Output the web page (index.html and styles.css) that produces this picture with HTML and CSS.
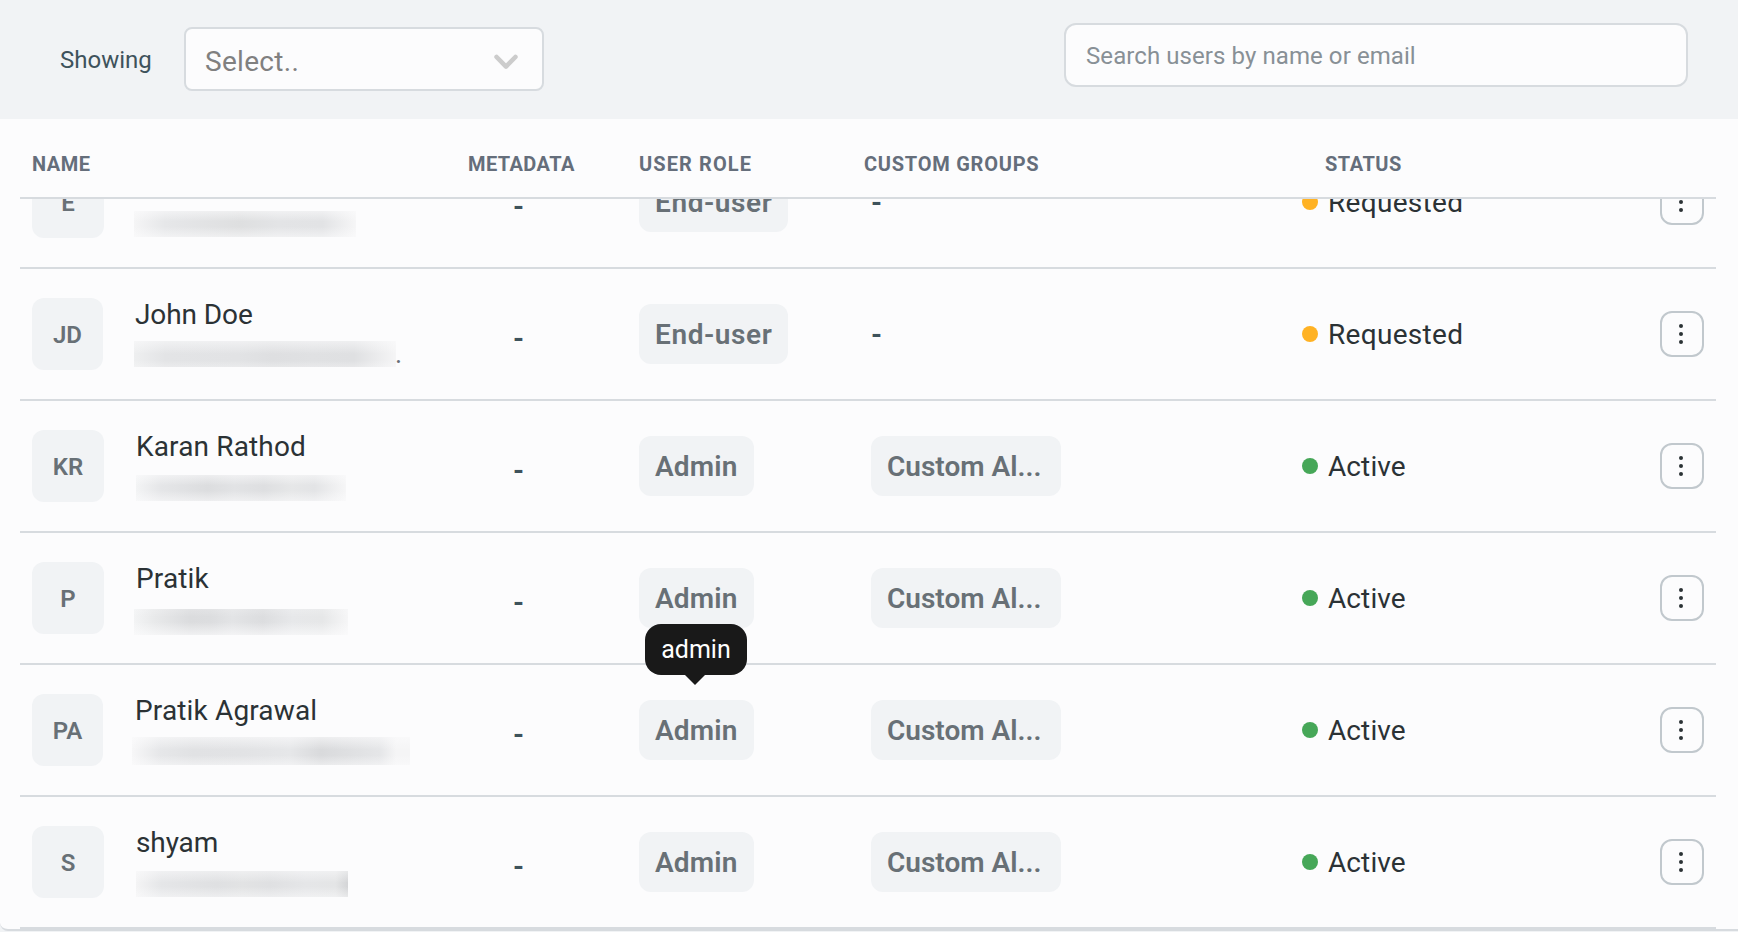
FILE: index.html
```html
<!DOCTYPE html>
<html lang="en">
<head>
<meta charset="utf-8">
<title>Users</title>
<link rel="stylesheet" href="styles.css">
</head>
<body>
<svg class="defs" aria-hidden="true">
  <symbol id="dots" viewBox="0 0 20 20"><circle cx="10" cy="2" r="2"/><circle cx="10" cy="10" r="2"/><circle cx="10" cy="18" r="2"/></symbol>
</svg>
<main class="panel">
  <section class="toolbar">
    <span class="label">Showing</span>
    <div class="select">
      <span>Select..</span>
      <svg class="chevron" viewBox="0 0 24 16"><path d="M2.6 3 12 12.6 21.4 3"/></svg>
    </div>
    <div class="search">Search users by name or email</div>
  </section>
  <section class="table">
    <div class="head grid">
      <span class="h-name">NAME</span>
      <span class="h-meta">METADATA</span>
      <span class="h-role">USER ROLE</span>
      <span class="h-groups">CUSTOM GROUPS</span>
      <span class="h-status">STATUS</span>
    </div>
    <div class="rows">
      <div class="row grid">
        <div class="user"><div class="avatar">E</div><div class="info"><div class="name"></div><div class="mask mask-1"></div></div></div>
        <div class="meta">-</div>
        <div class="role"><span class="pill pill-enduser">End-user</span></div>
        <div class="groups none">-</div>
        <div class="status pending"><i class="dot"></i><span>Requested</span></div>
        <button class="more"><svg><use href="#dots"/></svg></button>
      </div>
      <div class="row grid">
        <div class="user"><div class="avatar narrow">JD</div><div class="info"><div class="name name-jd">John Doe</div><div class="masked"><div class="mask mask-2"></div><span class="tail">.</span></div></div></div>
        <div class="meta">-</div>
        <div class="role"><span class="pill pill-enduser">End-user</span></div>
        <div class="groups none">-</div>
        <div class="status pending"><i class="dot"></i><span>Requested</span></div>
        <button class="more"><svg><use href="#dots"/></svg></button>
      </div>
      <div class="row grid">
        <div class="user"><div class="avatar">KR</div><div class="info"><div class="name">Karan Rathod</div><div class="mask mask-3"></div></div></div>
        <div class="meta">-</div>
        <div class="role"><span class="pill pill-admin">Admin</span></div>
        <div class="groups"><span class="pill pill-group">Custom Al...</span></div>
        <div class="status"><i class="dot"></i><span>Active</span></div>
        <button class="more"><svg><use href="#dots"/></svg></button>
      </div>
      <div class="row grid">
        <div class="user"><div class="avatar">P</div><div class="info"><div class="name">Pratik</div><div class="mask mask-4"></div></div></div>
        <div class="meta">-</div>
        <div class="role"><span class="pill pill-admin">Admin</span></div>
        <div class="groups"><span class="pill pill-group">Custom Al...</span></div>
        <div class="status"><i class="dot"></i><span>Active</span></div>
        <button class="more"><svg><use href="#dots"/></svg></button>
      </div>
      <div class="row grid">
        <div class="user"><div class="avatar narrow">PA</div><div class="info"><div class="name">Pratik Agrawal</div><div class="mask mask-5"></div></div></div>
        <div class="meta">-</div>
        <div class="role"><span class="pill pill-admin">Admin<span class="tooltip">admin</span></span></div>
        <div class="groups"><span class="pill pill-group">Custom Al...</span></div>
        <div class="status"><i class="dot"></i><span>Active</span></div>
        <button class="more"><svg><use href="#dots"/></svg></button>
      </div>
      <div class="row grid">
        <div class="user"><div class="avatar">S</div><div class="info"><div class="name name-sh">shyam</div><div class="mask mask-6"></div></div></div>
        <div class="meta">-</div>
        <div class="role"><span class="pill pill-admin">Admin</span></div>
        <div class="groups"><span class="pill pill-group">Custom Al...</span></div>
        <div class="status"><i class="dot"></i><span>Active</span></div>
        <button class="more"><svg><use href="#dots"/></svg></button>
      </div>
    </div>
  </section>
</main>
</body>
</html>
```
FILE: styles.css
```css
* { box-sizing: border-box; }
body {
  margin: 0;
  height: 932px;
  overflow: hidden;
  background: #f1f3f5;
  color: #2b3235;
  font: 28px/32px Roboto, "Liberation Sans", sans-serif;
}
.defs { display: none; }
.panel {
  height: 931px;
  overflow: hidden;
  background: #fcfcfd;
  border-bottom: 2px solid #d7dbdf;
  border-bottom-left-radius: 8px;
}

.toolbar {
  display: flex;
  height: 119px;
  padding: 0 50px 0 60px;
  background: #f1f3f5;
}
.label {
  width: 124px;
  padding-top: 44px;
  color: #3e525b;
  font-size: 24px;
}
.select {
  display: flex;
  justify-content: space-between;
  align-items: center;
  width: 360px;
  height: 64px;
  margin-top: 27px;
  padding: 5px 24px 0 19px;
  background: #fcfcfd;
  border: 2px solid #d7dbdf;
  border-radius: 8px;
  color: #808080;
  letter-spacing: .3px;
}
.chevron {
  width: 24px;
  height: 16px;
  fill: none;
  stroke: #ccc;
  stroke-width: 4.6;
  stroke-linecap: round;
  stroke-linejoin: round;
}
.search {
  width: 624px;
  height: 64px;
  margin: 23px 0 0 auto;
  padding-left: 20px;
  background: #fcfcfd;
  border: 2px solid #d7dbdf;
  border-radius: 12px;
  color: #889096;
  font-size: 24px;
  letter-spacing: .08px;
  line-height: 63px;
}

.table { padding: 0 22px 0 20px; }
.grid {
  display: grid;
  grid-template-columns: 437px 170px 225px 438px 358px 44px;
  padding-left: 12px;
  border-bottom: 2px solid #d7dbdf;
}
.head {
  height: 80px;
  padding-top: 33px;
  color: #656e7b;
  font-size: 20px;
  font-weight: 700;
  line-height: 24px;
}
.h-name { letter-spacing: .5px; }
.h-meta { margin-left: -1px; letter-spacing: .4px; }
.h-role { letter-spacing: 1.1px; }
.h-groups { letter-spacing: .75px; }
.h-status { padding-left: 23px; letter-spacing: .5px; }

.rows {
  height: 730px;
  margin-right: -22px;
  padding-right: 22px;
  overflow: hidden;
}
.row {
  height: 132px;
  align-items: center;
}
.row:first-child { margin-top: -62px; }
.user { display: flex; gap: 32px; }
.avatar {
  width: 72px;
  height: 72px;
  background: #f1f3f5;
  border-radius: 12px;
  color: #687076;
  font-size: 24px;
  font-weight: 600;
  line-height: 74px;
  text-align: center;
}
.narrow { width: 71px; }
.info { height: 72px; }
.name {
  height: 32px;
  line-height: 34px;
  letter-spacing: .15px;
}
.name-jd, .name-sh { letter-spacing: -.1px; }

/* Redacted e-mail strips: edge fade laid over uneven grey tones */
.mask {
  width: 212px;
  height: 26px;
  margin-top: 13px;
  background:
    linear-gradient(rgba(252,252,253,.55), rgba(252,252,253,0) 40% 60%, rgba(252,252,253,.55)),
    linear-gradient(90deg, #f5f5f6, #e6e7e9 14%, #dedfe0 48%, #e3e4e6 65%, #e2e3e5 85%, #f6f6f7);
}
.mask-1 { width: 222px; margin-left: -2px; }
.mask-2 {
  width: 262px;
  margin: 0 0 0 -1px;
  background:
    linear-gradient(rgba(252,252,253,.55), rgba(252,252,253,0) 50% 75%, rgba(252,252,253,.3)),
    linear-gradient(90deg, #eeeff0, #e3e4e6 12%, #e2e3e5 40%, #dedfe1 53%, #e0e1e3 68%, #dfe0e2 84%, #f5f5f6);
}
.masked { display: flex; margin-top: 11px; }
.tail {
  height: 26px;
  margin-left: -1px;
  color: #687076;
  font-size: 27px;
  line-height: 26px;
}
.mask-3 {
  width: 210px;
  background:
    linear-gradient(rgba(252,252,253,.55), rgba(252,252,253,0) 40% 60%, rgba(252,252,253,.55)),
    linear-gradient(90deg, #f3f4f5, #e5e6e8 12%, #dcdddf 34%, #e2e3e5 47%, #dedfe1 61%, #e6e7e8 74%, #e3e4e6 85%, #f6f6f7);
}
.mask-4 {
  width: 214px;
  margin: 15px 0 0 -2px;
  background:
    linear-gradient(rgba(252,252,253,.2), rgba(252,252,253,0) 30% 50%, rgba(252,252,253,.65)),
    linear-gradient(90deg, #f3f4f5, #e8e9ea 10%, #dbdcde 26%, #dcdddf 36%, #e3e4e6 46%, #dcdddf 60%, #e7e8ea 74%, #e6e7e8 88%, #f6f6f7);
}
.mask-5 {
  width: 278px;
  height: 28px;
  margin: 11px 0 0 -3px;
  background:
    linear-gradient(rgba(252,252,253,.6), rgba(252,252,253,0) 45% 65%, rgba(252,252,253,.5)),
    linear-gradient(90deg, #f7f7f8, #e6e7e9 10%, #e1e2e4 22%, #e2e3e5 40%, #e6e7e9 57%, #d9dadc 68%, #e0e1e3 80%, #e5e6e8 89%, #f5f5f6 95%, #f5f5f6);
}
.mask-6 {
  background:
    linear-gradient(rgba(252,252,253,.5), rgba(252,252,253,0) 45% 60%, rgba(252,252,253,.5)),
    linear-gradient(90deg, #f4f4f5, #e5e6e8 12%, #dfe0e2 38%, #e2e3e4 50%, #dfe0e2 63%, #e5e6e8 80%, #e4e5e6 94%, #d4d5d7);
}

.meta, .none {
  color: #3e525b;
  font-weight: 700;
}
.meta { padding: 10px 0 0 44px; }
.groups { padding-left: 7px; }
.none { padding-top: 1px; }
.role, .groups:not(.none) { display: flex; }
.pill {
  position: relative;
  height: 60px;
  padding-left: 16px;
  background: #f1f3f5;
  border-radius: 12px;
  color: #687076;
  font-weight: 600;
  line-height: 62px;
  white-space: nowrap;
}
.pill-enduser { width: 149px; letter-spacing: .6px; }
.pill-admin { width: 115px; letter-spacing: .15px; }
.pill-group { width: 190px; }
.tooltip {
  position: absolute;
  z-index: 2;
  top: -76px;
  left: 6px;
  width: 102px;
  height: 51px;
  background: #191919;
  border-radius: 16px;
  color: #fff;
  font-size: 25px;
  font-weight: 400;
  letter-spacing: 0;
  line-height: 51px;
  text-align: center;
}
.tooltip::after {
  content: "";
  position: absolute;
  top: 51px;
  left: 40px;
  border: 10px solid transparent;
  border-top-color: #191919;
  border-bottom: 0;
}
.status {
  display: flex;
  align-items: center;
  gap: 10px;
}
.status span {
  padding-top: 1px;
  line-height: 33px;
  letter-spacing: .1px;
}
.pending span { letter-spacing: .3px; }
.dot {
  width: 16px;
  height: 16px;
  border-radius: 50%;
  background: #46a758;
}
.pending .dot { background: #ffb224; }
.more {
  display: flex;
  align-items: center;
  justify-content: center;
  width: 44px;
  height: 46px;
  padding: 0 3px 0 0;
  background: #fcfcfd;
  border: 2px solid #c1c8cd;
  border-radius: 12px;
}
.more svg { flex: none; width: 20px; height: 20px; fill: #2b3235; }
```
